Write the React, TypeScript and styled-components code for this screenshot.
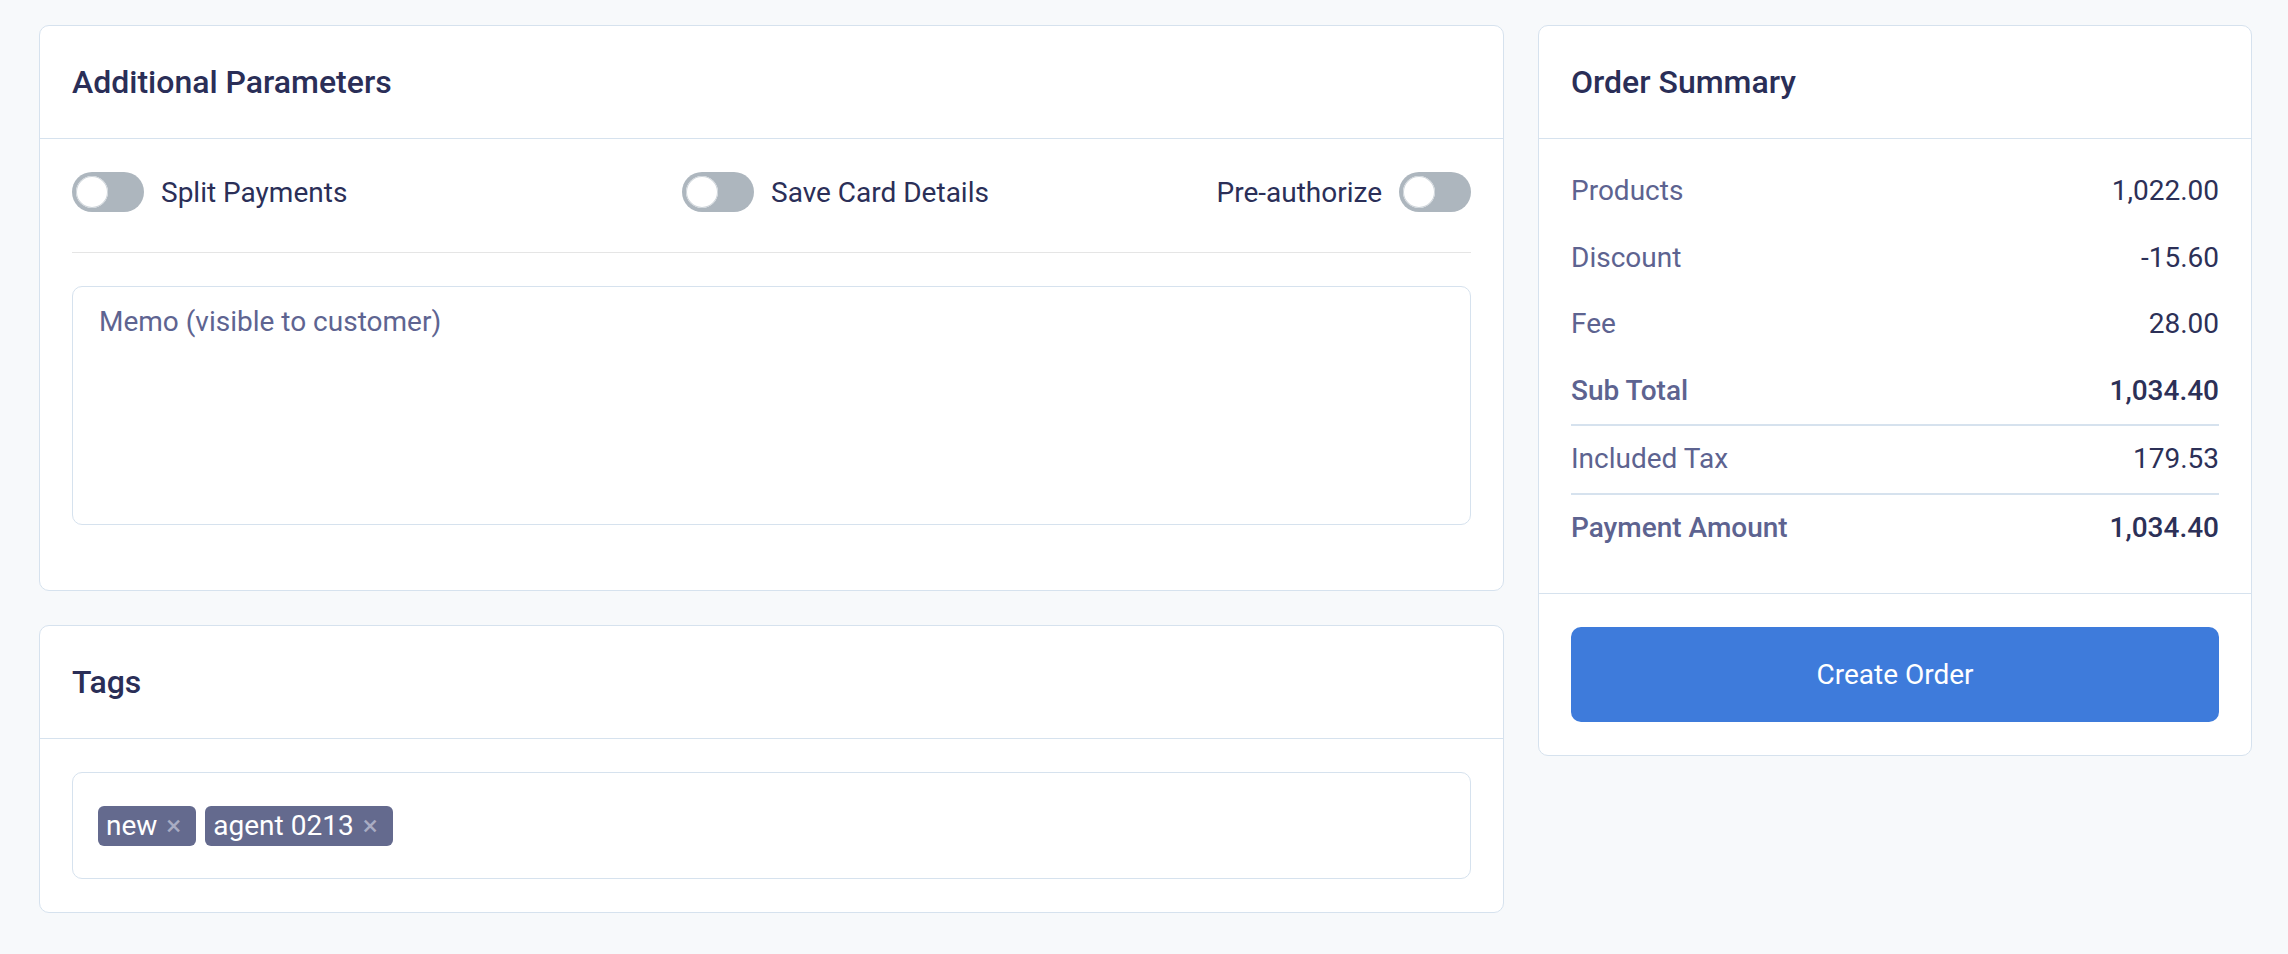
import React, { useState } from 'react';
import styled, { createGlobalStyle } from 'styled-components';

const GlobalStyle = createGlobalStyle`
  body {
    margin: 0;
    background: #f7f9fb;
    font-family: Roboto, "Liberation Sans", Arial, sans-serif;
    color: #2b2f58;
  }
  * { box-sizing: border-box; }
`;

const Page = styled.div`
  display: grid;
  grid-template-columns: 1465px 714px;
  gap: 34px;
  align-items: start;
  padding: 25px 0 0 39px;
`;

const Column = styled.div`
  display: flex;
  flex-direction: column;
  gap: 34px;
`;

const Card = styled.section`
  background: #ffffff;
  border: 1px solid #d6e2ee;
  border-radius: 10px;
`;

const CardHeader = styled.header`
  height: 113px;
  display: flex;
  align-items: center;
  padding: 0 32px;
  border-bottom: 1px solid #d6e2ee;
`;

const CardTitle = styled.h2`
  margin: 0;
  font-size: 32px;
  font-weight: 500;
  color: #2a2e57;
`;

const CardBody = styled.div<{ $pad: string }>`
  padding: ${(p) => p.$pad};
`;

const ToggleRow = styled.div`
  display: grid;
  grid-template-columns: 610px 1fr auto;
  align-items: center;
  height: 40px;
`;

const ToggleLabel = styled.label`
  display: flex;
  align-items: center;
  gap: 17px;
  font-size: 28px;
  color: #2b2f58;
  cursor: pointer;
`;

const Track = styled.span<{ $on: boolean }>`
  display: flex;
  align-items: center;
  justify-content: ${(p) => (p.$on ? 'flex-end' : 'flex-start')};
  width: 72px;
  height: 40px;
  padding: 0 4px;
  border-radius: 20px;
  background: ${(p) => (p.$on ? '#3e7bdb' : '#adb6be')};
`;

const Knob = styled.span`
  width: 32px;
  height: 32px;
  border-radius: 50%;
  background: #ffffff;
  box-shadow: inset 0 0 0 1px #cfd5da;
`;

const Divider = styled.hr`
  margin: 40px 0 33px;
  border: 0;
  border-top: 1px solid #e5e5e5;
`;

const Memo = styled.textarea`
  display: block;
  width: 100%;
  height: 239px;
  padding: 14px 26px;
  border: 1px solid #d6e2ee;
  border-radius: 10px;
  font-family: Roboto, "Liberation Sans", Arial, sans-serif;
  font-size: 28px;
  line-height: 1.5;
  color: #2b2f58;
  resize: none;
  outline: none;

  &::placeholder {
    color: #5e6491;
  }
`;

const TagBox = styled.div`
  display: flex;
  align-items: center;
  gap: 9px;
  height: 107px;
  padding: 0 25px;
  border: 1px solid #d6e2ee;
  border-radius: 10px;
`;

const Chip = styled.span`
  display: inline-flex;
  align-items: center;
  height: 40px;
  padding: 0 15px 0 8px;
  border-radius: 6px;
  background: #646a8e;
  color: #ffffff;
  font-size: 28px;
`;

const ChipClose = styled.span`
  margin-left: 9px;
  color: #a9acc3;
  font-size: 28px;
  line-height: 1;
  cursor: pointer;
`;

const SummaryRow = styled.div<{ $bold?: boolean; $rule?: boolean }>`
  display: flex;
  justify-content: space-between;
  padding: 12px 0;
  line-height: 42.6px;
  font-size: 28px;
  font-weight: ${(p) => (p.$bold ? 500 : 400)};
  border-top: ${(p) => (p.$rule ? '2px solid #d6e2ee' : 'none')};
`;

const RowLabel = styled.span`
  color: #5d6390;
`;

const RowValue = styled.span`
  color: #2c3057;
`;

const CardFooter = styled.div`
  padding: 33px 32px;
  border-top: 1px solid #d6e2ee;
`;

const PrimaryButton = styled.button`
  display: block;
  width: 100%;
  height: 95px;
  border: none;
  border-radius: 10px;
  background: #3e7bdb;
  color: #ffffff;
  font-family: Roboto, "Liberation Sans", Arial, sans-serif;
  font-size: 28px;
  cursor: pointer;

  &:hover {
    background: #356fcc;
  }
`;

const Toggle: React.FC<{ label: string; labelFirst?: boolean }> = ({ label, labelFirst }) => {
  const [on, setOn] = useState(false);
  const sw = (
    <Track $on={on} onClick={() => setOn(!on)}>
      <Knob />
    </Track>
  );
  return (
    <ToggleLabel>
      {labelFirst && label}
      {sw}
      {!labelFirst && label}
    </ToggleLabel>
  );
};

const summary = [
  { label: 'Products', value: '1,022.00' },
  { label: 'Discount', value: '-15.60' },
  { label: 'Fee', value: '28.00' },
  { label: 'Sub Total', value: '1,034.40', bold: true },
  { label: 'Included Tax', value: '179.53', rule: true },
  { label: 'Payment Amount', value: '1,034.40', bold: true, rule: true },
];

const App: React.FC = () => {
  const [tags, setTags] = useState(['new', 'agent 0213']);

  return (
    <>
      <GlobalStyle />
      <Page>
        <Column>
          <Card>
            <CardHeader>
              <CardTitle>Additional Parameters</CardTitle>
            </CardHeader>
            <CardBody $pad="33px 32px 65px">
              <ToggleRow>
                <Toggle label="Split Payments" />
                <Toggle label="Save Card Details" />
                <Toggle label="Pre-authorize" labelFirst />
              </ToggleRow>
              <Divider />
              <Memo placeholder="Memo (visible to customer)" />
            </CardBody>
          </Card>

          <Card>
            <CardHeader>
              <CardTitle>Tags</CardTitle>
            </CardHeader>
            <CardBody $pad="33px 32px">
              <TagBox>
                {tags.map((t) => (
                  <Chip key={t}>
                    {t}
                    <ChipClose onClick={() => setTags(tags.filter((x) => x !== t))}>×</ChipClose>
                  </Chip>
                ))}
              </TagBox>
            </CardBody>
          </Card>
        </Column>

        <Card>
          <CardHeader>
            <CardTitle>Order Summary</CardTitle>
          </CardHeader>
          <CardBody $pad="19px 32px 31px">
            {summary.map((row) => (
              <SummaryRow key={row.label} $bold={row.bold} $rule={row.rule}>
                <RowLabel>{row.label}</RowLabel>
                <RowValue>{row.value}</RowValue>
              </SummaryRow>
            ))}
          </CardBody>
          <CardFooter>
            <PrimaryButton>Create Order</PrimaryButton>
          </CardFooter>
        </Card>
      </Page>
    </>
  );
};

export default App;
